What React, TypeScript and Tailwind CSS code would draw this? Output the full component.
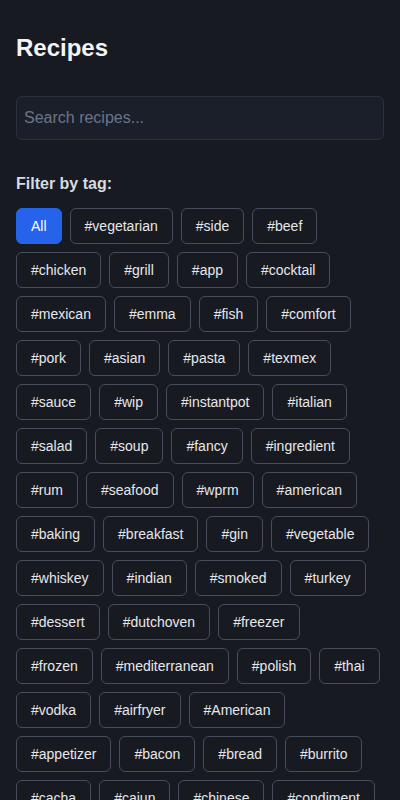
const tags = [
  'vegetarian', 'side', 'beef', 'chicken', 'grill', 'app', 'cocktail',
  'mexican', 'emma', 'fish', 'comfort', 'pork', 'asian', 'pasta', 'texmex',
  'sauce', 'wip', 'instantpot', 'italian', 'salad', 'soup', 'fancy', 'ingredient',
  'rum', 'seafood', 'wprm', 'american', 'baking', 'breakfast', 'gin', 'vegetable',
  'whiskey', 'indian', 'smoked', 'turkey', 'dessert', 'dutchoven', 'freezer',
  'frozen', 'mediterranean', 'polish', 'thai', 'vodka', 'airfryer', 'American',
  'appetizer', 'bacon', 'bread', 'burrito', 'cacha', 'cajun', 'chinese', 'condiment',
  'curry', 'easy', 'french', 'greek',
]

const App = () => {
  return (
    <div className="min-h-screen bg-[#181a21] px-4 pt-8 pb-8 font-['Liberation_Sans',Arial,sans-serif]">
      <h1 className="text-2xl font-bold leading-8 text-[#f3f4f6] mb-8">Recipes</h1>

      <input
        type="text"
        placeholder="Search recipes..."
        className="w-full h-11 rounded-md border border-[#2b313d] bg-[#1b1f29] px-[7px] text-base text-gray-200 placeholder:text-[#6b7589] outline-none mb-8"
      />

      <div className="text-base font-bold leading-6 text-[#d7dbe2] mb-3">Filter by tag:</div>

      <ul className="flex flex-wrap gap-2">
        <li>
          <button className="h-9 px-3.5 rounded-md border border-[#2563eb] bg-[#2563eb] text-sm text-white">All</button>
        </li>
        {tags.map((tag) => (
          <li key={tag}>
            <button className="h-9 px-3.5 rounded-md border border-[#474d5b] bg-transparent text-sm text-[#e5e7eb]">
              #{tag}
            </button>
          </li>
        ))}
      </ul>
    </div>
  )
}

export default App
